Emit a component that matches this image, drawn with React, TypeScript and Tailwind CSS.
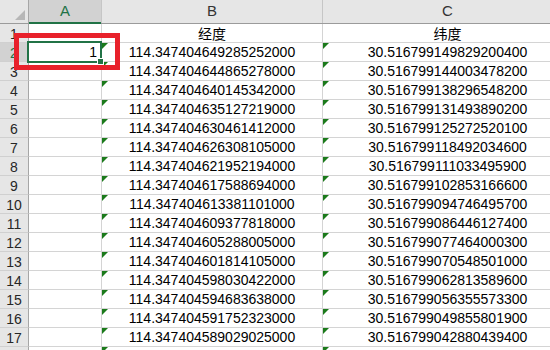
import React from "react";

const B = [
  "114.347404649285252000",
  "114.347404644865278000",
  "114.347404640145342000",
  "114.347404635127219000",
  "114.347404630461412000",
  "114.347404626308105000",
  "114.347404621952194000",
  "114.347404617588694000",
  "114.347404613381101000",
  "114.347404609377818000",
  "114.347404605288005000",
  "114.347404601814105000",
  "114.347404598030422000",
  "114.347404594683638000",
  "114.347404591752323000",
  "114.347404589029025000",
];
const C = [
  "30.516799149829200400",
  "30.516799144003478200",
  "30.516799138296548200",
  "30.516799131493890200",
  "30.516799125272520100",
  "30.516799118492034600",
  "30.516799111033495900",
  "30.516799102853166600",
  "30.516799094746495700",
  "30.516799086446127400",
  "30.516799077464000300",
  "30.516799070548501000",
  "30.516799062813589600",
  "30.516799056355573300",
  "30.516799049855801900",
  "30.516799042880439400",
];

const font = { fontFamily: '"Liberation Sans", Arial, "Noto Sans CJK SC", sans-serif' };

function Tri() {
  return (
    <svg className="absolute left-0 top-0" width="6" height="6" viewBox="0 0 6 6">
      <polygon points="0,0 6,0 0,6" fill="#1b7a1b" />
    </svg>
  );
}

type RowProps = { n?: number; a?: string; b?: string; c?: string; tri?: boolean; sel?: boolean };

function Row({ n, a, b, c, tri, sel }: RowProps) {
  return (
    <div className="flex h-[19px] shrink-0">
      <div
        className={`w-[29px] shrink-0 flex items-end justify-center pb-[1px] border-r border-r-[#a6a6a6] border-b border-b-[#d0d0d0] text-[14px] leading-none ${
          sel ? "bg-[#d2d2d2] text-[#217346]" : "bg-[#e6e6e6] text-[#262626]"
        }`}
      >
        {n}
      </div>
      <div className="w-[73px] shrink-0 relative flex items-end justify-end pr-[4px] pb-[2px] border-r border-b border-[#d4d4d4] text-[14px] leading-none text-black">
        {a}
      </div>
      <div className="w-[221px] shrink-0 relative flex items-end justify-center pb-[2px] border-r border-b border-[#d4d4d4] text-[14px] leading-none text-black">
        {tri && <Tri />}
        {b}
      </div>
      <div className="w-[250px] shrink-0 relative flex items-end justify-center pb-[2px] border-r border-b border-[#d4d4d4] text-[14px] leading-none text-black">
        {tri && <Tri />}
        {c}
      </div>
    </div>
  );
}

export default function App() {
  return (
    <div className="w-[550px] h-[350px] overflow-hidden bg-white relative" style={font}>
      <div className="flex flex-col w-[573px]">
        {/* header */}
        <div className="flex h-[24px] shrink-0 border-b border-[#9b9b9b]">
          <div className="w-[29px] shrink-0 bg-[#e6e6e6] border-r border-[#a6a6a6] relative">
            <svg className="absolute right-[3px] bottom-[3px]" width="10" height="10" viewBox="0 0 10 10">
              <polygon points="10,0 10,10 0,10" fill="#b7b7b7" />
            </svg>
          </div>
          <div className="w-[73px] shrink-0 bg-[#d2d2d2] border-r border-[#c6c6c6] relative flex items-center justify-center text-[15px] text-[#217346]">
            A
            <div className="absolute left-0 right-0 bottom-[-1px] h-[2px] bg-[#217346]" />
          </div>
          <div className="w-[221px] shrink-0 bg-[#e6e6e6] border-r border-[#c6c6c6] flex items-center justify-center text-[15px] text-[#333]">
            B
          </div>
          <div className="w-[250px] shrink-0 bg-[#e6e6e6] border-r border-[#c6c6c6] flex items-center justify-center text-[15px] text-[#333]">
            C
          </div>
        </div>
        <div className="flex h-[19px] shrink-0">
          <div className="w-[29px] shrink-0 flex items-end justify-center pb-[1px] border-r border-r-[#a6a6a6] border-b border-b-[#d0d0d0] bg-[#e6e6e6] text-[#262626] text-[14px] leading-none">
            1
          </div>
          <div className="w-[73px] shrink-0 border-r border-b border-[#d4d4d4]" />
          <div
            className="w-[221px] shrink-0 flex items-end justify-center pb-[2px] border-r border-b border-[#d4d4d4] text-[14px] leading-none text-black"
            style={{ fontFamily: '"Noto Sans CJK SC", sans-serif' }}
          >
            经度
          </div>
          <div
            className="w-[250px] shrink-0 flex items-end justify-center pb-[2px] border-r border-b border-[#d4d4d4] text-[14px] leading-none text-black"
            style={{ fontFamily: '"Noto Sans CJK SC", sans-serif' }}
          >
            纬度
          </div>
        </div>
        {B.map((b, i) => (
          <Row key={i} n={i + 2} a={i === 0 ? "1" : undefined} b={b} c={C[i]} tri sel={i === 0} />
        ))}
        <Row tri />
      </div>

      {/* selection */}
      <div className="absolute left-[27px] top-[41px] w-[75px] h-[22px] border-2 border-[#217346] pointer-events-none" />
      <div className="absolute left-[97px] top-[58px] w-[7px] h-[7px] bg-[#217346] border border-white" />

      {/* red highlight box */}
      <div className="absolute left-[14px] top-[33px] w-[106px] h-[37px] border-[5px] border-[#e8212b]" />
    </div>
  );
}
